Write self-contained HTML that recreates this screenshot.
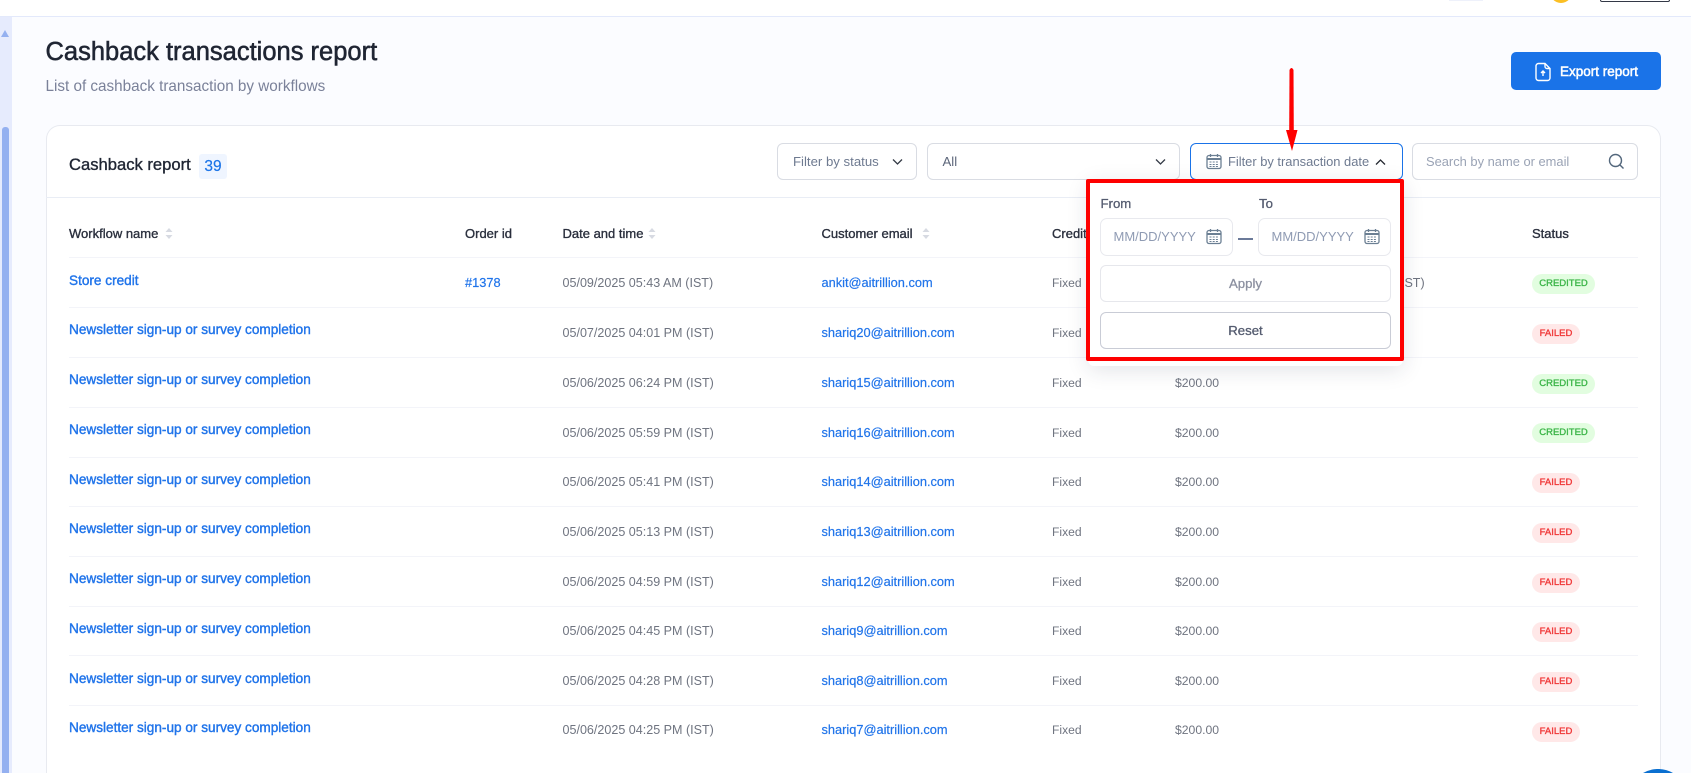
<!DOCTYPE html>
<html lang="en"><head><meta charset="utf-8"><title>Cashback transactions report</title>
<style>
*{box-sizing:border-box}
html,body{margin:0;padding:0;width:1691px;height:773px;overflow:hidden;background:#fbfcff;font-family:"Liberation Sans",Arial,sans-serif}
#root{position:absolute;left:0;top:0;width:1691px;height:773px;overflow:hidden;background:#fbfcff}
.a{position:absolute}
.t{position:absolute;white-space:nowrap;line-height:20px;height:20px}
.h{font-size:13px;color:#2a2f3d;-webkit-text-stroke:.35px #2a2f3d}
.w{left:69px;font-size:13.6px;color:#2074ea;-webkit-text-stroke:.4px #2074ea}
.d{left:562.5px;font-size:12.55px;color:#6f7480}
.e{left:821.5px;font-size:12.8px;color:#2074ea;-webkit-text-stroke:.2px #2074ea}
.f{left:1052px;font-size:12.1px;color:#6f7480}
.m{left:1175px;font-size:12.2px;color:#6f7480}
.b{position:absolute;left:1532px;height:20px;border-radius:10px;font-size:9.5px;line-height:20px;text-align:center;-webkit-text-stroke:.35px currentColor}
.c{width:63px;background:#e2fde0;color:#3eb64a}
.x{width:48px;background:#ffe8e8;color:#f03a3a}
.sep{position:absolute;left:69px;width:1569px;height:1px;background:#f3f4f9}
.box{position:absolute;top:143px;height:37px;background:#fff;border:1px solid #d9dce3;border-radius:6px}
.inp{position:absolute;top:218px;width:133px;height:38px;border:1px solid #e8e9ee;border-radius:7px;background:#fff}
.btn{position:absolute;left:1100px;width:291px;height:37px;border-radius:6px;background:#fff;text-align:center;font-size:13.2px;line-height:35px;-webkit-text-stroke:.3px currentColor}
</style></head>
<body>
<div id="root">
<!-- top bar -->
<div class="a" style="left:0;top:0;width:1691px;height:17px;background:#fff;border-bottom:1px solid #e3e9fb"></div>
<div class="a" style="left:1449px;top:0;width:34px;height:1px;background:#eef1fb"></div>
<div class="a" style="left:1550px;top:0;width:22px;height:3px;overflow:hidden"><div class="a" style="left:0;top:-19px;width:22px;height:22px;border-radius:50%;background:#fbbf24"></div></div>
<div class="a" style="left:1600px;top:0;width:70px;height:2px;border:1px solid #333846;border-top:0;border-radius:0 0 2px 2px;background:#fff"></div>

<!-- scrollbar -->
<div class="a" style="left:0;top:17px;width:12px;height:756px;background:#e6ebfd"></div>
<div class="a" style="left:1px;top:30px;width:0;height:0;border-left:4.5px solid transparent;border-right:4.5px solid transparent;border-bottom:7px solid #94b0f0"></div>
<div class="a" style="left:2px;top:127px;width:7px;height:646px;background:#94b0f0;border-radius:3px 3px 0 0"></div>

<!-- heading -->
<div class="t" style="left:45.5px;top:42px;font-size:25.5px;color:#1f2533;-webkit-text-stroke:.55px #1f2533">Cashback transactions report</div>
<div class="t" style="left:45.5px;top:77px;font-size:15.25px;color:#7a8199">List of cashback transaction by workflows</div>

<!-- export -->
<div class="a" style="left:1511px;top:52px;width:150px;height:38px;background:#1a73e8;border-radius:5px"></div>
<svg class="a" style="left:1535px;top:62px" width="17" height="20" viewBox="0 0 17 20" fill="none" stroke="#fff" stroke-width="1.4"><path d="M3.5 1.5h6.5l5 5v9.5a2.5 2.5 0 0 1-2.5 2.5h-9a2.5 2.5 0 0 1-2.5-2.5v-12a2.500 2.500 0 0 1 2.500-2.500z"/><path d="M10 1.500v3a2 2 0 0 0 2 2h3"/><path d="M8 14V9M6 11l2-2 2 2"/></svg>
<div class="t" style="left:1560px;top:62px;font-size:13.5px;color:#fff;-webkit-text-stroke:.5px #fff">Export report</div>

<!-- card -->
<div class="a" style="left:45.5px;top:125px;width:1615.5px;height:648px;background:#fff;border:1px solid #e8eaf0;border-bottom:0;border-radius:14px 14px 0 0"></div>
<div class="a" style="left:46px;top:197px;width:1615px;height:1px;background:#e9edf5"></div>
<div class="t" style="left:69px;top:155px;font-size:16.6px;color:#1f2533;-webkit-text-stroke:.35px #1f2533">Cashback report</div>
<div class="a" style="left:199px;top:154px;width:28px;height:25px;background:#eff5ff;border-radius:3px;font-size:15.5px;line-height:26px;text-align:center;color:#1b74e8;-webkit-text-stroke:.2px #1b74e8">39</div>

<!-- filters -->
<div class="box" style="left:777px;width:140px"></div>
<div class="t" style="left:793px;top:152px;font-size:13.2px;color:#6e7a90">Filter by status</div>
<svg class="a" style="left:892px;top:158px" width="11" height="8" viewBox="0 0 11 8" fill="none" stroke="#343a46" stroke-width="1.3"><path d="M1 1.500l4.500 4.500 4.500-4.500"/></svg>
<div class="box" style="left:927px;width:253px"></div>
<div class="t" style="left:942.5px;top:152px;font-size:13.2px;color:#5c667a">All</div>
<svg class="a" style="left:1155px;top:158px" width="11" height="8" viewBox="0 0 11 8" fill="none" stroke="#343a46" stroke-width="1.3"><path d="M1 1.500l4.500 4.500 4.500-4.500"/></svg>
<div class="box" style="left:1190px;width:213px;border-color:#1a73e8"></div>
<svg class="a" style="left:1206px;top:153px" width="16" height="17" viewBox="0 0 16 17" fill="none" stroke="#6b7f93" stroke-width="1.300"><rect x="1" y="2.500" width="14" height="13" rx="2"/><path d="M1 6h14" stroke-width="2"/><path d="M4.500 1v3M11.500 1v3"/><path d="M3.500 9h9M3.500 11.500h9M3.500 13.500h9" stroke-dasharray="2 1.200" stroke-width="1.100"/></svg>
<div class="t" style="left:1228px;top:152px;font-size:12.9px;color:#6e7a90">Filter by transaction date</div>
<svg class="a" style="left:1374.500px;top:158px" width="11" height="8" viewBox="0 0 11 8" fill="none" stroke="#23272f" stroke-width="1.300"><path d="M1 6.500l4.500-4.500 4.500 4.500"/></svg>
<div class="box" style="left:1412px;width:226px"></div>
<div class="t" style="left:1426px;top:152px;font-size:12.9px;color:#9aa3b5">Search by name or email</div>
<svg class="a" style="left:1608px;top:153px" width="17" height="17" viewBox="0 0 17 17" fill="none" stroke="#53677c" stroke-width="1.400"><circle cx="7.500" cy="7.500" r="6"/><path d="M12 12l3.500 3.500"/></svg>

<!-- table head -->
<div class="t h" style="left:69px;top:224px">Workflow name</div>
<svg class="a" style="left:164.500px;top:228px" width="8" height="11" viewBox="0 0 8 11" fill="#d7dae2"><path d="M4 0l3.500 4h-7zM4 11l3.500-4h-7z"/></svg>
<div class="t h" style="left:465px;top:224px">Order id</div>
<div class="t h" style="left:562.500px;top:224px">Date and time</div>
<svg class="a" style="left:648px;top:228px" width="8" height="11" viewBox="0 0 8 11" fill="#d7dae2"><path d="M4 0l3.500 4h-7zM4 11l3.500-4h-7z"/></svg>
<div class="t h" style="left:821.500px;top:224px">Customer email</div>
<svg class="a" style="left:922px;top:228px" width="8" height="11" viewBox="0 0 8 11" fill="#d7dae2"><path d="M4 0l3.500 4h-7zM4 11l3.500-4h-7z"/></svg>
<div class="t h" style="left:1052px;top:224px">Credit type</div>
<div class="t h" style="left:1532px;top:223.500px">Status</div>

<div class="sep" style="top:257px"></div><div class="sep" style="top:307px"></div><div class="sep" style="top:357px"></div><div class="sep" style="top:407px"></div><div class="sep" style="top:457px"></div><div class="sep" style="top:506px"></div><div class="sep" style="top:556px"></div><div class="sep" style="top:606px"></div><div class="sep" style="top:655px"></div><div class="sep" style="top:705px"></div>

<!-- row 1 -->
<div class="t w" style="top:270.500px">Store credit</div>
<div class="t e" style="left:465px;top:272.500px">#1378</div>
<div class="t d" style="top:272.500px">05/09/2025 05:43 AM (IST)</div>
<div class="t e" style="top:272.500px">ankit@aitrillion.com</div>
<div class="t f" style="top:272.500px">Fixed</div>
<div class="t m" style="top:272.500px">$200.00</div>
<div class="t d" style="left:1274px;top:272.500px">05/09/2026 05:43 AM (IST)</div>
<div class="b c" style="top:274px">CREDITED</div>
<!-- row 2 -->
<div class="t w" style="top:320px">Newsletter sign-up or survey completion</div>
<div class="t d" style="top:323px">05/07/2025 04:01 PM (IST)</div>
<div class="t e" style="top:323px">shariq20@aitrillion.com</div>
<div class="t f" style="top:323px">Fixed</div>
<div class="t m" style="top:323px">$200.00</div>
<div class="b x" style="top:324px">FAILED</div>
<!-- row 3 -->
<div class="t w" style="top:369.500px">Newsletter sign-up or survey completion</div>
<div class="t d" style="top:372.500px">05/06/2025 06:24 PM (IST)</div>
<div class="t e" style="top:372.500px">shariq15@aitrillion.com</div>
<div class="t f" style="top:372.500px">Fixed</div>
<div class="t m" style="top:372.500px">$200.00</div>
<div class="b c" style="top:373.500px">CREDITED</div>
<!-- row 4 -->
<div class="t w" style="top:420px">Newsletter sign-up or survey completion</div>
<div class="t d" style="top:422.500px">05/06/2025 05:59 PM (IST)</div>
<div class="t e" style="top:422.500px">shariq16@aitrillion.com</div>
<div class="t f" style="top:422.500px">Fixed</div>
<div class="t m" style="top:422.500px">$200.00</div>
<div class="b c" style="top:422.500px">CREDITED</div>
<!-- row 5 -->
<div class="t w" style="top:470px">Newsletter sign-up or survey completion</div>
<div class="t d" style="top:472px">05/06/2025 05:41 PM (IST)</div>
<div class="t e" style="top:472px">shariq14@aitrillion.com</div>
<div class="t f" style="top:472px">Fixed</div>
<div class="t m" style="top:472px">$200.00</div>
<div class="b x" style="top:472.500px">FAILED</div>
<!-- row 6 -->
<div class="t w" style="top:518.500px">Newsletter sign-up or survey completion</div>
<div class="t d" style="top:521.500px">05/06/2025 05:13 PM (IST)</div>
<div class="t e" style="top:521.500px">shariq13@aitrillion.com</div>
<div class="t f" style="top:521.500px">Fixed</div>
<div class="t m" style="top:521.500px">$200.00</div>
<div class="b x" style="top:523px">FAILED</div>
<!-- row 7 -->
<div class="t w" style="top:568.500px">Newsletter sign-up or survey completion</div>
<div class="t d" style="top:572px">05/06/2025 04:59 PM (IST)</div>
<div class="t e" style="top:572px">shariq12@aitrillion.com</div>
<div class="t f" style="top:572px">Fixed</div>
<div class="t m" style="top:572px">$200.00</div>
<div class="b x" style="top:573px">FAILED</div>
<!-- row 8 -->
<div class="t w" style="top:619px">Newsletter sign-up or survey completion</div>
<div class="t d" style="top:621px">05/06/2025 04:45 PM (IST)</div>
<div class="t e" style="top:621px">shariq9@aitrillion.com</div>
<div class="t f" style="top:621px">Fixed</div>
<div class="t m" style="top:621px">$200.00</div>
<div class="b x" style="top:622px">FAILED</div>
<!-- row 9 -->
<div class="t w" style="top:669px">Newsletter sign-up or survey completion</div>
<div class="t d" style="top:670.500px">05/06/2025 04:28 PM (IST)</div>
<div class="t e" style="top:670.500px">shariq8@aitrillion.com</div>
<div class="t f" style="top:670.500px">Fixed</div>
<div class="t m" style="top:670.500px">$200.00</div>
<div class="b x" style="top:671.500px">FAILED</div>
<!-- row 10 -->
<div class="t w" style="top:717.500px">Newsletter sign-up or survey completion</div>
<div class="t d" style="top:720px">05/06/2025 04:25 PM (IST)</div>
<div class="t e" style="top:720px">shariq7@aitrillion.com</div>
<div class="t f" style="top:720px">Fixed</div>
<div class="t m" style="top:720px">$200.00</div>
<div class="b x" style="top:722px">FAILED</div>

<!-- chat bubble (only its top edge is visible) -->
<svg class="a" style="left:1643px;top:769px" width="30" height="4" viewBox="0 0 30 4"><path d="M0 4A30 30 0 0 1 30 4z" fill="#0a6fd0"/></svg>

<!-- popup -->
<div class="a" style="left:1088px;top:180px;width:315px;height:186px;background:#fff;border-radius:6px;box-shadow:0 4px 22px rgba(30,40,70,.13)"></div>
<div class="t" style="left:1100.500px;top:194px;font-size:13.2px;color:#555c70;-webkit-text-stroke:.3px #555c70">From</div>
<div class="t" style="left:1259px;top:194px;font-size:13.2px;color:#555c70;-webkit-text-stroke:.3px #555c70">To</div>
<div class="inp" style="left:1100px"></div>
<div class="inp" style="left:1258px"></div>
<div class="t" style="left:1113.500px;top:227px;font-size:13px;color:#8f9bb3">MM/DD/YYYY</div>
<div class="t" style="left:1271.500px;top:227px;font-size:13px;color:#8f9bb3">MM/DD/YYYY</div>
<svg class="a" style="left:1206px;top:228px" width="16" height="17" viewBox="0 0 16 17" fill="none" stroke="#6b7f93" stroke-width="1.300"><rect x="1" y="2.500" width="14" height="13" rx="2"/><path d="M1 6h14" stroke-width="2"/><path d="M4.500 1v3M11.500 1v3"/><path d="M3.500 9h9M3.500 11.500h9M3.500 13.500h9" stroke-dasharray="2 1.200" stroke-width="1.100"/></svg>
<svg class="a" style="left:1364px;top:228px" width="16" height="17" viewBox="0 0 16 17" fill="none" stroke="#6b7f93" stroke-width="1.300"><rect x="1" y="2.500" width="14" height="13" rx="2"/><path d="M1 6h14" stroke-width="2"/><path d="M4.500 1v3M11.500 1v3"/><path d="M3.500 9h9M3.500 11.500h9M3.500 13.500h9" stroke-dasharray="2 1.200" stroke-width="1.100"/></svg>
<div class="a" style="left:1238px;top:238px;width:15px;height:2px;background:#6b7a99"></div>
<div class="btn" style="top:265px;border:1px solid #e6e7ec;color:#8b90a0">Apply</div>
<div class="btn" style="top:312px;border:1px solid #c9ccd6;color:#555c70">Reset</div>

<!-- annotations -->
<div class="a" style="left:1085.500px;top:179px;width:318px;height:182px;border:4px solid #fe0000;border-radius:2px"></div>
<svg class="a" style="left:1280px;top:66px" width="24" height="88" viewBox="0 0 24 88"><path d="M9.500 4Q11.500 0 13.500 4L13.800 66h-4.600z" fill="#fe0000"/><path d="M6 64h11.500L12 85z" fill="#fe0000"/></svg>
</div>
</body></html>
